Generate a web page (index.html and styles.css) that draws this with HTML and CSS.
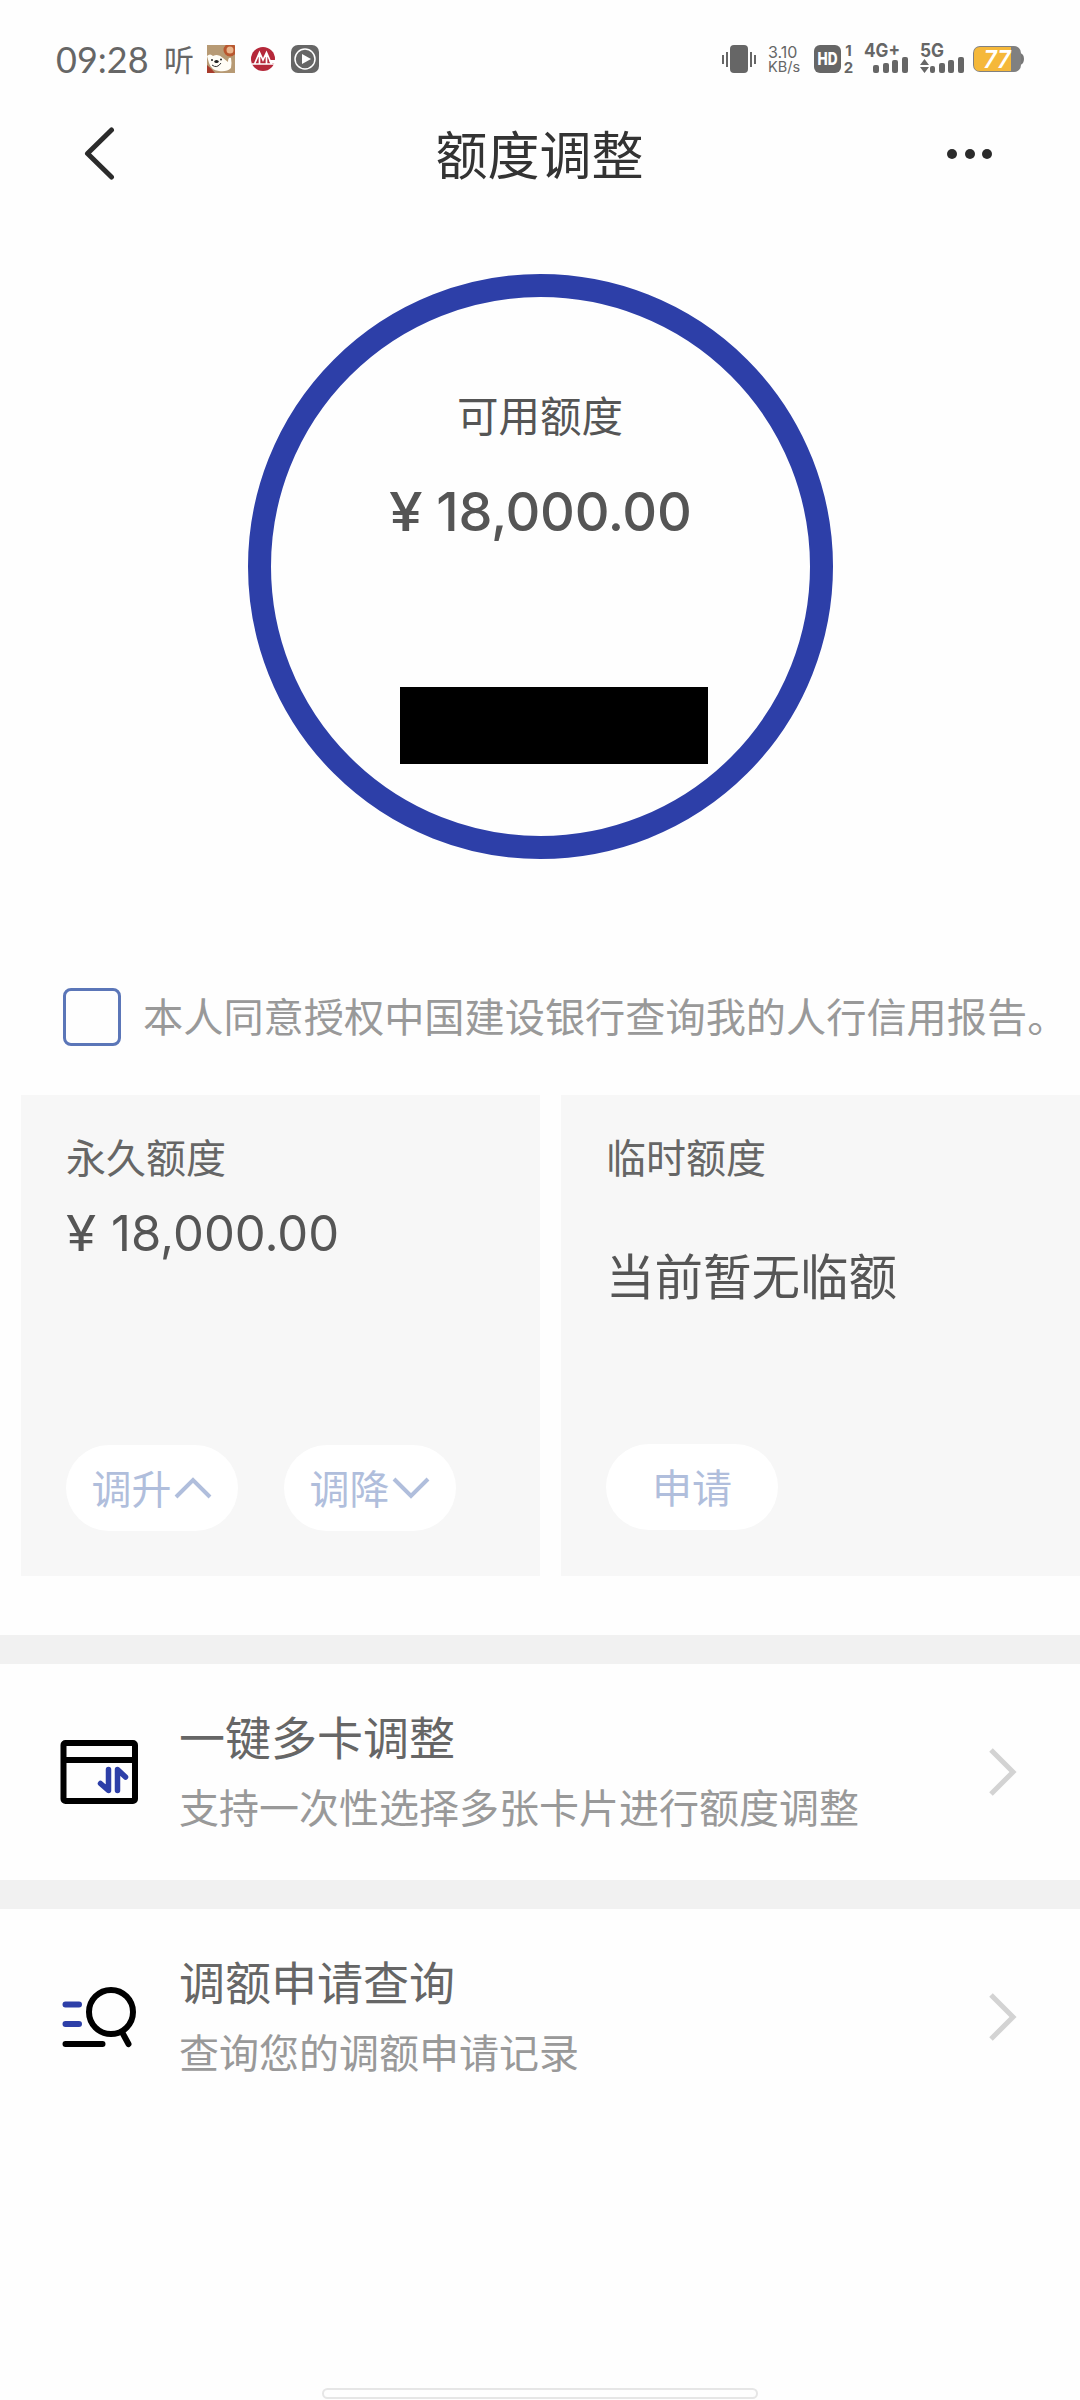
FILE: index.html
```html
<!DOCTYPE html>
<html lang="zh-CN">
<head>
<meta charset="utf-8">
<title>额度调整</title>
<link rel="stylesheet" href="styles.css">
</head>
<body>
<div class="screen">
  <div class="status">
    <div class="status-left">
      <span class="time">09:28</span>
      <span class="listen">听</span>
      <svg class="app-dog" width="28" height="28" viewBox="0 0 28 28">
        <rect width="28" height="28" fill="#b79a74"/>
        <circle cx="23" cy="5" r="5" fill="#e9b58d" stroke="#b9572f" stroke-width="3"/>
        <path d="M0 20Q5 24 8 28H0z" fill="#a83b2c"/>
        <path d="M0 11Q3 8 6 11Q11 8 16 13L21 17Q21 12 24 13Q25 18 24 23Q20 27 12 26Q4 25 2 18z" fill="#fffdf6"/>
        <ellipse cx="9.500" cy="16.500" rx="2.200" ry="1.500" fill="#222"/>
        <circle cx="5" cy="15" r="1" fill="#222"/><circle cx="14" cy="14.500" r="1" fill="#222"/>
        <path d="M5 20Q10 24 14 18" fill="none" stroke="#333" stroke-width="1"/>
      </svg>
      <svg class="app-bank" width="26" height="26" viewBox="0 0 26 26">
        <circle cx="13" cy="13" r="12" fill="#b5283a"/>
        <path d="M4.500 18L9.500 6.500L13 14L16.500 6.500L21.500 18M9.500 9V18M16.500 9V18M2 18H25" fill="none" stroke="#fff" stroke-width="1.700"/>
        <path d="M19 14H26V17H20z" fill="#fff"/>
      </svg>
      <svg class="app-play" width="28" height="28" viewBox="0 0 28 28">
        <rect width="28" height="28" rx="7" fill="#666"/>
        <circle cx="14" cy="14" r="10" fill="none" stroke="#fff" stroke-width="1.500"/>
        <path d="M11 9L20 14L11 19z" fill="#fff"/>
      </svg>
    </div>
    <div class="status-right">
      <svg width="34" height="28" viewBox="0 0 34 28" fill="#666">
        <rect x="8" width="18" height="28" rx="4"/>
        <path d="M0 10h2v9H0zM4 7h2v15H4zM28 7h2v15h-2zM32 10h2v9h-2z"/>
      </svg>
      <div class="speed"><span class="speed-value">3.10</span><span class="speed-unit">KB/s</span></div>
      <svg class="hd" width="40" height="36" viewBox="0 -4 40 36">
        <rect width="27" height="28" rx="6" fill="#666"/>
        <text x="13.500" y="20" class="hd-label" textLength="20" lengthAdjust="spacingAndGlyphs">HD</text>
        <text x="34.500" y="11" class="sim-one">1</text>
        <text x="34.500" y="27.500" class="sim-two">2</text>
      </svg>
      <svg class="net-4g" width="46" height="38" viewBox="0 -3 46 38" fill="#666">
        <text x="0" y="14" class="net" textLength="36" lengthAdjust="spacingAndGlyphs">4G+</text>
        <rect x="9" y="22" width="6" height="8" rx="2"/><rect x="19" y="20" width="6" height="10" rx="2"/><rect x="28" y="17" width="6" height="13" rx="2"/><rect x="38" y="14" width="6" height="16" rx="2"/>
      </svg>
      <svg class="net-5g" width="46" height="38" viewBox="0 -3 46 38" fill="#666">
        <text x="0" y="14" class="net" textLength="24" lengthAdjust="spacingAndGlyphs">5G</text>
        <path d="M0 22L4.500 16L9 22zM0 24L4.500 30L9 24z"/>
        <rect x="10" y="23" width="5" height="7" rx="2"/><rect x="19" y="20" width="6" height="10" rx="2"/><rect x="28" y="17" width="6" height="13" rx="2"/><rect x="38" y="14" width="6" height="16" rx="2"/>
      </svg>
      <svg class="battery" width="51" height="30" viewBox="0 -2 51 30">
        <path d="M47 7Q51 8 51 13Q51 18 47 19z" fill="#777"/>
        <rect width="48" height="26" rx="7" fill="#808080"/>
        <path d="M7 1H38V25H7Q1 25 1 19V7Q1 1 7 1z" fill="#f5b83a"/>
        <text x="24" y="21.500" class="battery-label" textLength="27" lengthAdjust="spacingAndGlyphs">77</text>
      </svg>
    </div>
  </div>

  <header class="nav">
    <svg width="34" height="56" viewBox="0 0 34 56" fill="none" stroke="#2b2b2b" stroke-width="5" stroke-linecap="round" stroke-linejoin="round"><path d="M29.500 3L5.500 26.500L29.500 50"/></svg>
    <h1 class="nav-title">额度调整</h1>
    <svg width="48" height="14" viewBox="0 0 48 14" fill="#2b2b2b"><circle cx="6" cy="6" r="5"/><circle cx="24" cy="6" r="5"/><circle cx="41" cy="6" r="5"/></svg>
  </header>

  <section class="ring">
    <div class="ring-label">可用额度</div>
    <div class="ring-amount"><span class="yen">¥</span>18,000.00</div>
    <div class="redacted"></div>
  </section>

  <label class="agree">
    <span class="box"></span>
    <span class="agree-text">本人同意授权中国建设银行查询我的人行信用报告。</span>
  </label>

  <section class="cards">
    <div class="card">
      <div class="card-title">永久额度</div>
      <div class="card-amount"><span class="yen">¥</span>18,000.00</div>
      <div class="actions">
        <div class="pill">调升<svg width="40" height="24" viewBox="0 0 40 24"><path d="M3 22L20 5L37 22"/></svg></div>
        <div class="pill">调降<svg width="40" height="24" viewBox="0 0 40 24"><path d="M3 4L20 21L37 4"/></svg></div>
      </div>
    </div>
    <div class="card">
      <div class="card-title">临时额度</div>
      <div class="card-note">当前暂无临额</div>
      <div class="actions actions-single"><div class="pill">申请</div></div>
    </div>
  </section>

  <section class="row">
    <svg class="row-icon" width="80" height="68" viewBox="60 1738 80 68" fill="none" stroke-width="6" stroke-linecap="round" stroke-linejoin="round">
      <rect x="63.500" y="1743" width="71.500" height="58" rx="2" stroke="#000"/>
      <path d="M64 1760H135" stroke="#000"/>
      <path d="M108.500 1769.500V1790.500L100.500 1783.500M117.500 1790.500V1769.500L125.500 1777" stroke="#2d3fa8" stroke-width="5.500"/>
    </svg>
    <div class="row-text">
      <div class="row-title">一键多卡调整</div>
      <div class="row-sub">支持一次性选择多张卡片进行额度调整</div>
    </div>
    <svg class="go" width="32" height="52" viewBox="0 0 32 52"><path d="M3 4L25 26L3 48"/></svg>
  </section>
  <section class="row">
    <svg class="row-icon" width="80" height="68" viewBox="60 1982 80 68" fill="none" stroke-width="6" stroke-linecap="round">
      <path d="M65.500 2003.500H79M65.500 2023H79" stroke="#2d3fa8"/>
      <ellipse cx="111" cy="2011" rx="22" ry="22" stroke="#000"/>
      <path d="M65.500 2043H102.500M122 2031L128.500 2043" stroke="#000"/>
    </svg>
    <div class="row-text">
      <div class="row-title">调额申请查询</div>
      <div class="row-sub">查询您的调额申请记录</div>
    </div>
    <svg class="go" width="32" height="52" viewBox="0 0 32 52"><path d="M3 4L25 26L3 48"/></svg>
  </section>

  <div class="home-bar"></div>
</div>
</body>
</html>
```
FILE: styles.css
```css
* { box-sizing: border-box; }
body {
  margin: 0;
  background: #fefefe;
  font-family: "Noto Sans CJK SC", sans-serif;
  color: #555;
}
svg { display: block; flex: none; }
.screen {
  width: 1080px;
  height: 2400px;
  display: flex;
  flex-direction: column;
  overflow: hidden;
}

/* status bar */
.status {
  flex: none;
  height: 118px;
  padding: 0 56px;
  display: flex;
  align-items: center;
  justify-content: space-between;
  color: #666;
}
.status-left, .status-right { display: flex; align-items: center; }
.time { width: 93px; padding-bottom: 1px; font: 36px/40px Lato, sans-serif; }
.listen { margin-left: 15px; width: 30px; padding-bottom: 3px; font-size: 30px; line-height: 44px; }
.app-dog { margin-left: 13px; }
.app-bank { margin-left: 15px; }
.app-play { margin-left: 15px; }
.speed {
  margin-left: 12px;
  width: 36px;
  display: flex;
  flex-direction: column;
  font-family: Inter, sans-serif;
  white-space: nowrap;
}
.speed-value { margin-bottom: -5px; font-size: 16px; line-height: 20px; }
.speed-unit { font-size: 14.500px; line-height: 20px; }
.hd { margin-left: 10px; }
.hd-label { font: 800 17px Inter, sans-serif; fill: #fff; text-anchor: middle; }
.sim-one, .sim-two { font: 700 15px Inter, sans-serif; fill: #666; text-anchor: middle; }
.net { font: 700 18.500px Inter, sans-serif; }
.net-4g { margin-left: 10px; }
.net-5g { margin-left: 10px; }
.battery { margin-left: 7px; }
.battery-label { font: italic 600 24px Inter, sans-serif; fill: #fff; text-anchor: middle; }

/* title bar */
.nav {
  flex: none;
  height: 74px;
  padding: 0 86px 0 82px;
  display: flex;
  align-items: center;
  justify-content: space-between;
}
.nav-title {
  margin: 0;
  padding: 0 0 5px 17px;
  font-size: 52px;
  line-height: 68px;
  font-weight: 400;
  color: #333;
}

/* available limit */
.ring {
  flex: none;
  align-self: center;
  width: 585px;
  height: 585px;
  margin-top: 82px;
  border: 23px solid #2d3fa8;
  border-radius: 50%;
  display: flex;
  flex-direction: column;
  align-items: center;
}
.ring-label { margin-top: 87px; font-size: 41.500px; line-height: 60px; }
.ring-amount {
  margin-top: 38px;
  font: 500 54px/60px Inter, sans-serif;
  letter-spacing: -0.3px;
  white-space: nowrap;
}
.yen { display: inline-block; margin-right: 18px; transform: scaleX(1.12); transform-origin: left; }
.redacted { width: 308px; height: 77px; margin: 145px 0 0 28px; background: #000; }

/* consent */
.agree {
  flex: none;
  height: 58px;
  margin-top: 129px;
  padding-left: 63px;
  display: flex;
  align-items: center;
  gap: 22px;
}
.box { flex: none; width: 58px; height: 58px; border: 3px solid #5b76b8; border-radius: 8px; }
.agree-text { padding-bottom: 4px; font-size: 40.200px; line-height: 54px; color: #999; white-space: nowrap; }

/* limit cards */
.cards {
  flex: none;
  height: 481px;
  margin: 49px 0 59px 21px;
  display: grid;
  grid-template-columns: 519px 519px;
  gap: 21px;
}
.card {
  padding: 32px 45px 45px;
  background: #f7f7f7;
  display: flex;
  flex-direction: column;
}
.card-title { font-size: 40px; line-height: 58px; color: #666; }
.card-amount { margin-top: 19px; font: 400 49px/60px Inter, sans-serif; }
.card-note { margin-top: 57px; font-size: 48.500px; line-height: 64px; }
.actions { margin-top: auto; display: flex; gap: 46px; }
.actions-single { padding-bottom: 1px; }
.pill {
  width: 172px;
  height: 86px;
  padding-bottom: 3px;
  border-radius: 43px;
  background: #fff;
  display: flex;
  align-items: center;
  justify-content: center;
  font-size: 40px;
  line-height: 58px;
  color: #b0bedc;
}
.pill svg { margin-left: 1px; fill: none; stroke: #b0bedc; stroke-width: 4; }

/* links */
.row {
  flex: none;
  height: 245px;
  border-top: 29px solid #f1f1f1;
  padding: 0 60px;
  display: flex;
  align-items: center;
}
.row-text { margin-left: 39px; padding-bottom: 4px; flex: 1; }
.row-title { font-size: 46px; line-height: 70px; color: #666; }
.row-sub { padding-top: 1px; font-size: 40px; line-height: 70px; color: #999; }
.go { fill: none; stroke: #d3d3d3; stroke-width: 5; }

.home-bar {
  flex: none;
  align-self: center;
  width: 436px;
  height: 11px;
  margin-top: auto;
  margin-bottom: 1px;
  border: 2px solid #e6e6e6;
  border-radius: 6px;
}
```
